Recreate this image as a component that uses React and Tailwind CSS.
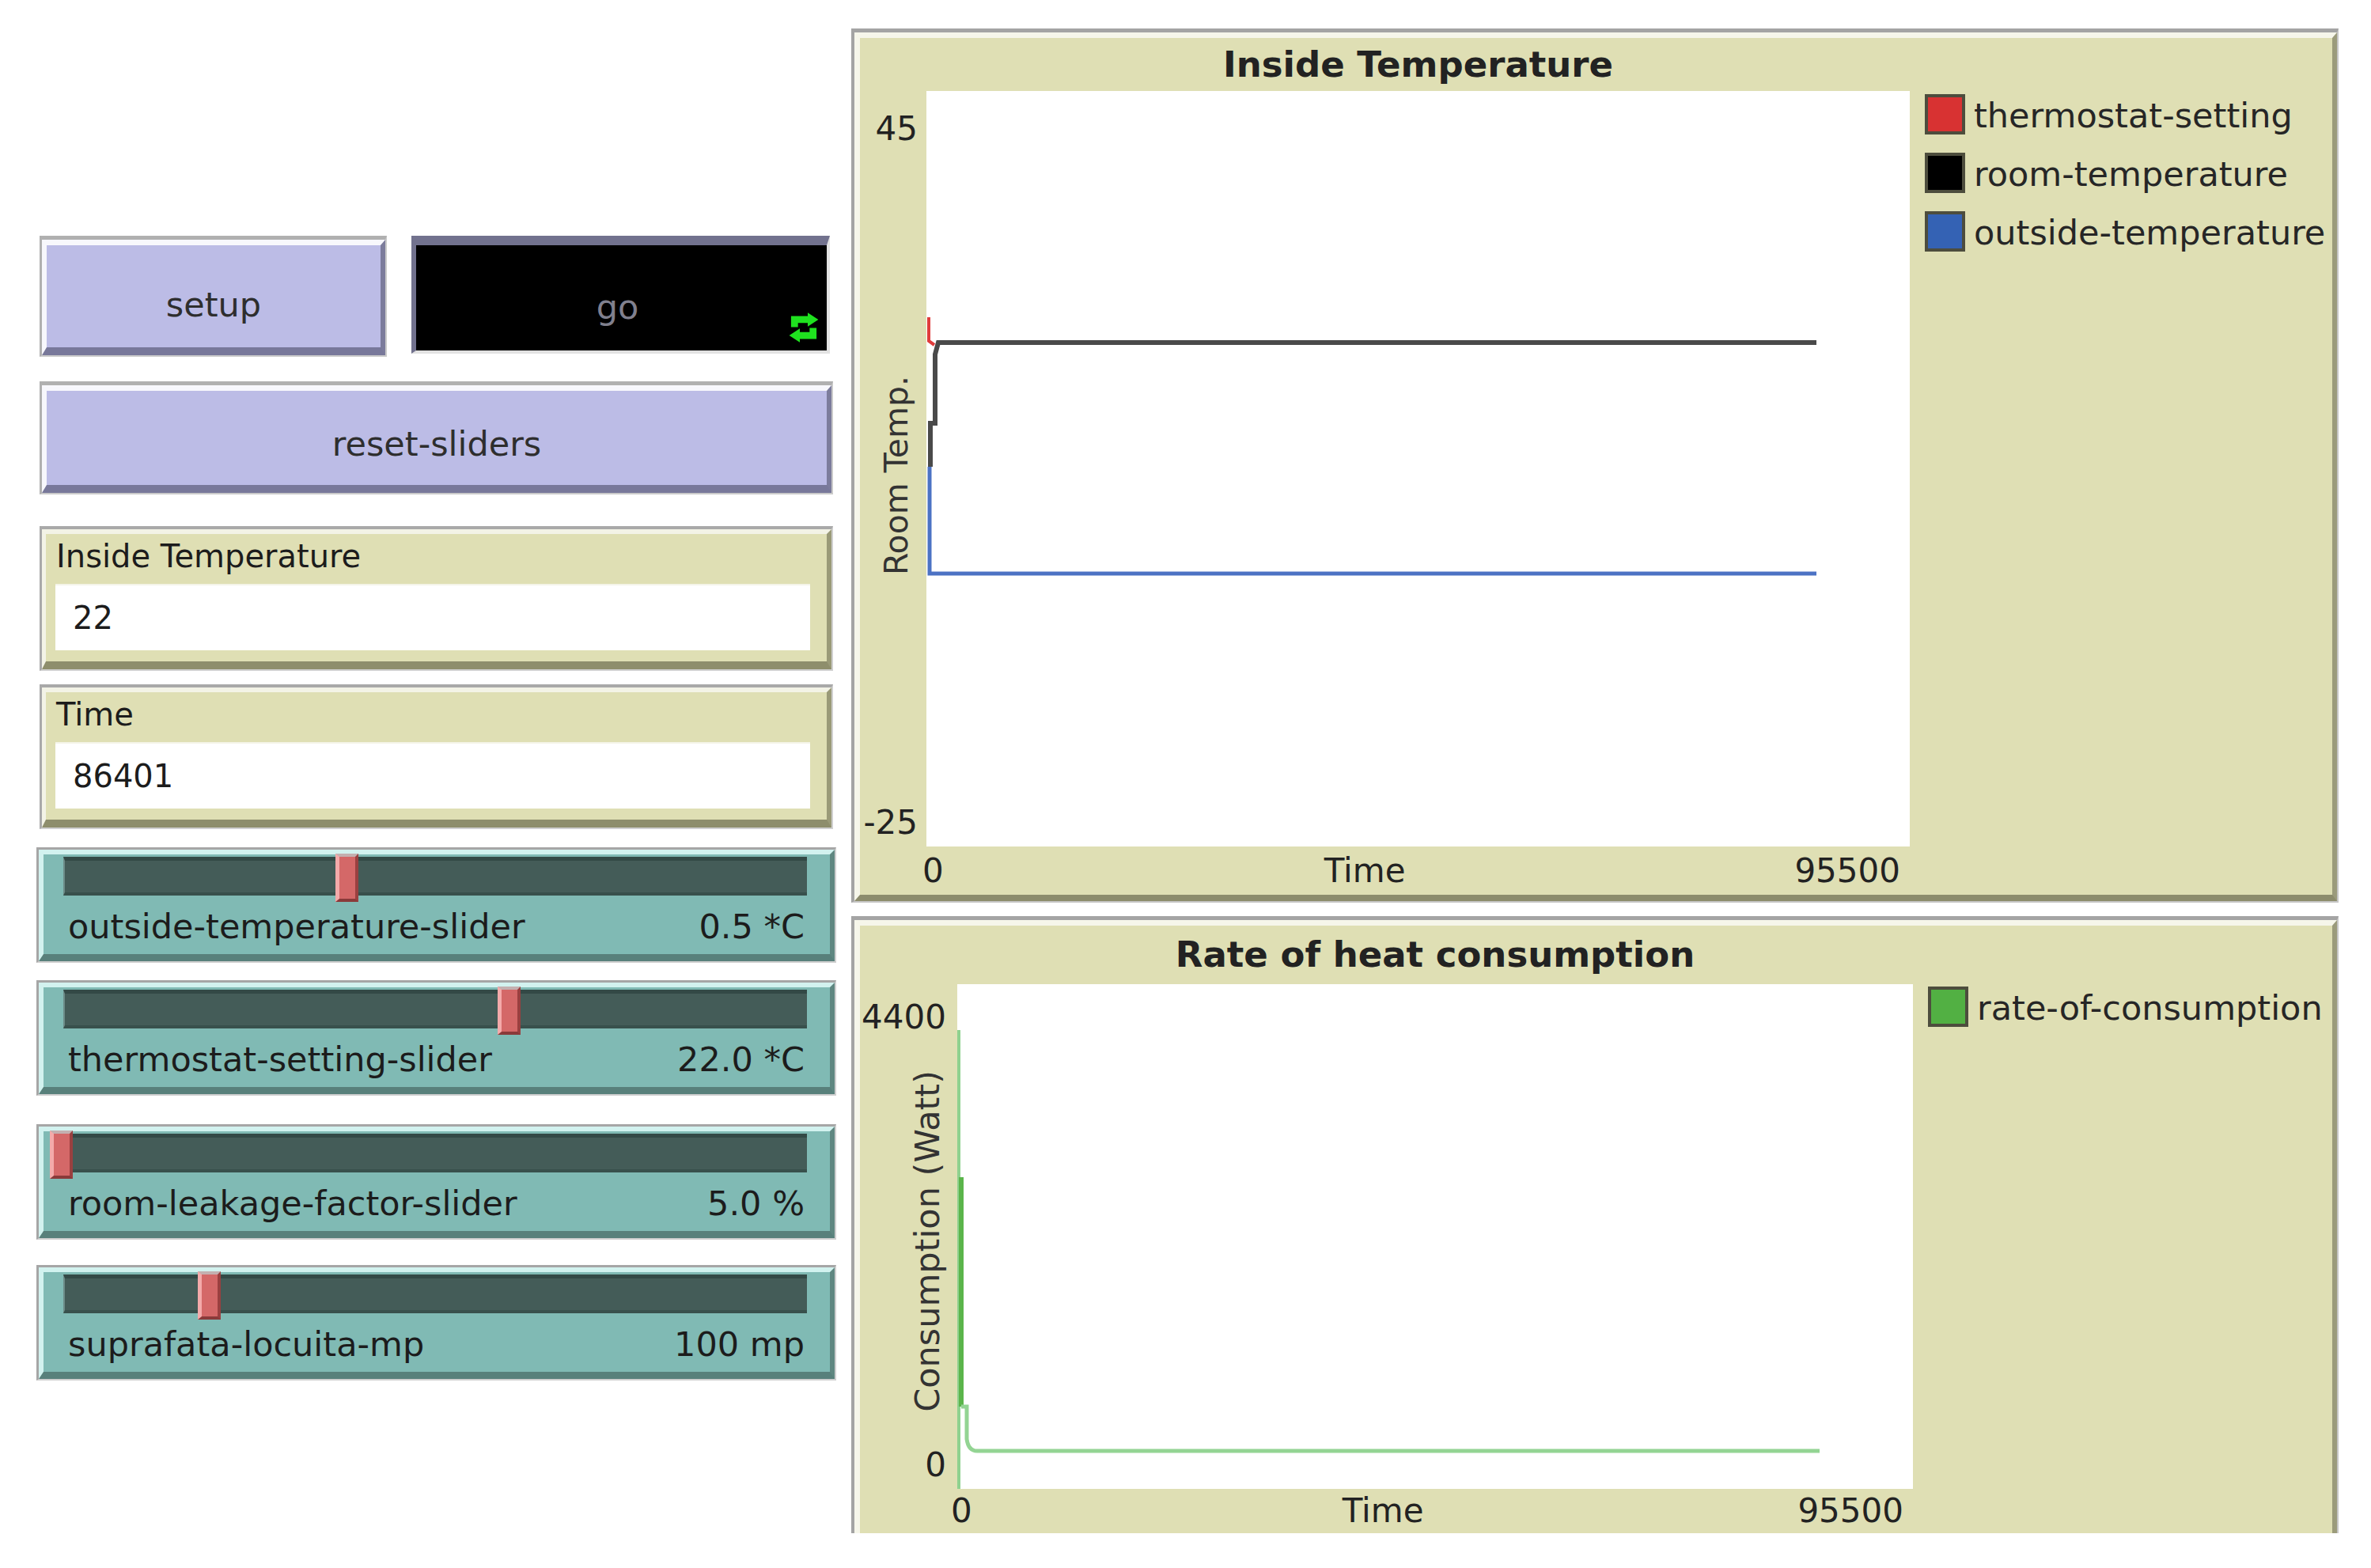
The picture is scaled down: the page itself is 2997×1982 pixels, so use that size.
import React from "react";

const TRACK_W = 940;

const sliders = [
  { name: "outside-temperature-slider", value: "0.5 *C", at: 0.366, gap: "mt-[23px]" },
  { name: "thermostat-setting-slider", value: "22.0 *C", at: 0.584, gap: "mt-[22px]" },
  { name: "room-leakage-factor-slider", value: "5.0 %", at: -0.018, gap: "mt-[36px]" },
  { name: "suprafata-locuita-mp", value: "100 mp", at: 0.181, gap: "mt-[32px]" },
];

const monitors = [
  { label: "Inside Temperature", value: "22", gap: "mt-[40px]" },
  { label: "Time", value: "86401", gap: "mt-[17px]" },
];

function ForeverIcon() {
  return (
    <svg width="42" height="46" viewBox="0 0 10 11">
      <path d="M2.2 5.4V3.1h4.4" fill="none" stroke="#1fe21f" strokeWidth="2.1" />
      <path d="M6.2 1.0L9.4 3.1L6.2 5.2z" fill="#1fe21f" />
      <path d="M7.8 5.6v2.3H3.4" fill="none" stroke="#1fe21f" strokeWidth="2.1" />
      <path d="M3.8 5.8L0.6 7.9L3.8 10z" fill="#1fe21f" />
    </svg>
  );
}

function LavButton({ label, className, pad }) {
  return (
    <div
      className={`border-t-[5px] border-l-[3px] border-t-[#b0b0b0] border-l-[#b0b0b0] border-b-2 border-r-2 border-b-[#cacaca] border-r-[#cacaca] ${className}`}
    >
      <div
        className={`h-full bg-[#bcbce6] border-t-[7px] border-l-[6px] border-t-[#f7f7fc] border-l-[#f7f7fc] border-b-[10px] border-r-[6px] border-b-[#78789a] border-r-[#7c7c9c] flex items-center justify-center text-[43px] text-[#2e2e2e] ${pad}`}
      >
        {label}
      </div>
    </div>
  );
}

function Monitor({ label, value, gap }) {
  return (
    <div
      className={`${gap} ml-[4px] w-[1003px] h-[183px] border-t-4 border-l-[3px] border-t-[#a9a9a9] border-l-[#a9a9a9] border-b-2 border-r-2 border-b-[#d0d0d0] border-r-[#d0d0d0]`}
    >
      <div className="h-full bg-[#dfdfb4] border-t-[6px] border-l-[5px] border-t-[#f3f3e6] border-l-[#f3f3e6] border-b-[10px] border-r-[6px] border-b-[#8e8e6c] border-r-[#9a9a78] flex flex-col">
        <div className="pt-[4px] pl-[13px] text-[40px] leading-[48px] text-[#1c1c1c]">{label}</div>
        <div className="mt-[11px] ml-[12px] mr-[21px] h-[84px] bg-white border-t-2 border-[#f4f4e8] flex items-center pl-[22px] text-[40px] text-[#1c1c1c]">
          {value}
        </div>
      </div>
    </div>
  );
}

function Slider({ name, value, at, gap }) {
  return (
    <div
      className={`${gap} h-[146px] border-t-[3px] border-l-[3px] border-t-[#a6a6a6] border-l-[#a6a6a6] border-b-2 border-r-2 border-b-[#cfcfcf] border-r-[#cfcfcf]`}
    >
      <div className="h-full bg-[#80bab4] border-t-[6px] border-l-[6px] border-t-[#d2f2ef] border-l-[#d2f2ef] border-b-[9px] border-r-[6px] border-b-[#58807b] border-r-[#5f8781] flex flex-col">
        <div className="relative mt-[3px] ml-[25px] mr-[29px] h-[49px] bg-[#445c58] border-t-[5px] border-t-[#334946] border-b-4 border-b-[#38504c] border-l-2 border-l-[#6d8c88]">
          <div
            className="absolute top-[-9px] w-[29px] h-[61px] bg-[#d46868] border-l-[5px] border-l-[#f4aaaa] border-r-4 border-r-[#9a4040] border-t-4 border-t-[#c4b0b0] border-b-4 border-b-[#8a3a3a]"
            style={{ left: at * TRACK_W - 2 }}
          />
        </div>
        <div className="mt-[15px] pl-[31px] pr-[32px] flex justify-between text-[43px] leading-[48px] text-[#1c1c1c] whitespace-nowrap">
          <span>{name}</span>
          <span>{value}</span>
        </div>
      </div>
    </div>
  );
}

function PlotFrame({ className, children }) {
  return (
    <div
      className={`border-t-[5px] border-l-4 border-t-[#a4a4a4] border-l-[#a4a4a4] border-b-2 border-r-2 border-b-[#c6c6c6] border-r-[#c6c6c6] ${className}`}
    >
      <div className="h-full bg-[#dfdfb4] border-t-[7px] border-l-[7px] border-t-[#f6f6ea] border-l-[#f6f6ea] border-b-[8px] border-r-[6px] border-b-[#8c8c6c] border-r-[#9b9b7b]">
        {children}
      </div>
    </div>
  );
}

function Legend({ items, pad }) {
  return (
    <div className={`flex flex-col gap-[22px] ${pad}`}>
      {items.map((it) => (
        <div key={it.label} className="flex items-center gap-[11px]">
          <div className={`w-[51px] h-[51px] border-4 border-[#4d4d3d] ${it.color}`} />
          <span className="pt-[4px] text-[43px] leading-[48px] text-[#262626] whitespace-nowrap">{it.label}</span>
        </div>
      ))}
    </div>
  );
}

function TempChart() {
  return (
    <svg width="1243" height="955" className="block">
      <polyline points="4,475 4,610 1125,610" stroke="#4c72c4" strokeWidth="5" fill="none" />
      <polyline points="3,286 3,316 10,321" stroke="#e03c3c" strokeWidth="4" fill="none" />
      <polyline
        points="5,475 5,420 11,420 11,333 15,318 1125,318"
        stroke="#4a4a4a"
        strokeWidth="6"
        fill="none"
      />
    </svg>
  );
}

function HeatChart() {
  return (
    <svg width="1208" height="638" className="block">
      <polyline points="2,58 2,640" stroke="#8fd18f" strokeWidth="4" fill="none" />
      <polyline points="5,244 5,534" stroke="#5bb54b" strokeWidth="6" fill="none" />
      <path d="M5 534 H12 V575 Q14 590 25 590 H1090" stroke="#93d493" strokeWidth="5" fill="none" />
    </svg>
  );
}

export default function App() {
  return (
    <div className="w-[2997px] h-[1982px] bg-white flex overflow-hidden font-['DejaVu_Sans',sans-serif]">
      {/* left: buttons, monitors, sliders */}
      <div className="ml-[46px] w-[1011px] pt-[298px] flex flex-col shrink-0">
        <div className="ml-[4px] flex items-start gap-[31px]">
          <LavButton label="setup" className="w-[439px] h-[153px]" pad="pt-[22px]" />
          <div className="relative w-[529px] h-[149px] bg-black border-t-[12px] border-l-[6px] border-t-[#72728e] border-l-[#72728e] border-b-4 border-r-4 border-b-[#e2e2e2] border-r-[#e2e2e2] flex items-center justify-center pt-[24px] pr-[10px] text-[43px] text-[#80808e]">
            go
            <div className="absolute right-[8px] bottom-[6px]">
              <ForeverIcon />
            </div>
          </div>
        </div>
        <LavButton label="reset-sliders" className="mt-[31px] ml-[4px] w-[1003px] h-[143px]" pad="pt-[16px]" />
        {monitors.map((m) => (
          <Monitor key={m.label} {...m} />
        ))}
        {sliders.map((s) => (
          <Slider key={s.name} {...s} />
        ))}
      </div>

      {/* right: plots */}
      <div className="ml-[19px] w-[1880px] pt-[36px] flex flex-col shrink-0">
        <PlotFrame className="h-[1105px]">
          <div className="h-full grid grid-cols-[84px_1243px_1fr] grid-rows-[67px_955px_61px] text-[#222]">
            <div />
            <div className="flex items-center justify-center font-bold text-[45px]">Inside Temperature</div>
            <div />
            <div className="flex flex-col items-end pr-[11px] text-[42px] leading-[48px]">
              <span className="pt-[24px]">45</span>
              <div className="flex-1 flex items-center mr-[3px]">
                <span className="[writing-mode:vertical-rl] rotate-180 text-[41px] text-[#333]">Room Temp.</span>
              </div>
              <span className="pb-[6px]">-25</span>
            </div>
            <div className="bg-white">
              <TempChart />
            </div>
            <Legend
              pad="pt-[3px] pl-[19px]"
              items={[
                { label: "thermostat-setting", color: "bg-[#d83232]" },
                { label: "room-temperature", color: "bg-black" },
                { label: "outside-temperature", color: "bg-[#3462b4]" },
              ]}
            />
            <div />
            <div className="flex items-center text-[42px] whitespace-nowrap">
              <span className="ml-[-5px]">0</span>
              <span className="ml-[481px]">Time</span>
              <span className="ml-auto mr-[12px]">95500</span>
            </div>
            <div />
          </div>
        </PlotFrame>

        <div className="mt-[17px] h-[780px] overflow-hidden">
          <PlotFrame className="h-[800px]">
            <div className="h-full grid grid-cols-[123px_1208px_1fr] grid-rows-[74px_638px_66px] text-[#222]">
              <div />
              <div className="flex items-center justify-center font-bold text-[45px] whitespace-nowrap">
                Rate of heat consumption
              </div>
              <div />
              <div className="flex flex-col items-end pr-[14px] text-[42px] leading-[48px]">
                <span className="pt-[18px]">4400</span>
                <div className="flex-1 flex items-center">
                  <span className="[writing-mode:vertical-rl] rotate-180 text-[43px] text-[#333] whitespace-nowrap">
                    Consumption (Watt)
                  </span>
                </div>
                <span className="pb-[6px]">0</span>
              </div>
              <div className="bg-white">
                <HeatChart />
              </div>
              <Legend pad="pt-[2px] pl-[19px]" items={[{ label: "rate-of-consumption", color: "bg-[#52b043]" }]} />
              <div />
              <div className="flex items-start pt-[9px] text-[42px] leading-[38px] whitespace-nowrap">
                <span className="ml-[-8px]">0</span>
                <span className="ml-[468px]">Time</span>
                <span className="ml-auto mr-[12px]">95500</span>
              </div>
              <div />
            </div>
          </PlotFrame>
        </div>
      </div>
    </div>
  );
}
